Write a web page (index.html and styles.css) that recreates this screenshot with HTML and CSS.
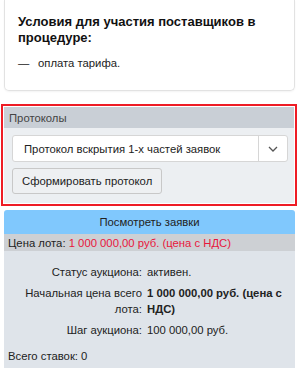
FILE: index.html
```html
<!DOCTYPE html>
<html lang="ru">
<head>
    <meta charset="UTF-8">
    <meta name="viewport" content="width=device-width, initial-scale=1.0">
    <title>Процедура</title>
    <link rel="stylesheet" href="styles.css">
</head>
<body>
    <!-- Условия участия -->
    <div class="card">
        <h3 class="card-title">Условия для участия поставщиков в процедуре:</h3>
        <ul class="conditions">
            <li><span class="dash">—</span>оплата тарифа.</li>
        </ul>
    </div>

    <!-- Протоколы (выделено рамкой) -->
    <div class="highlight">
        <div class="panel">
            <div class="panel-head">Протоколы</div>
            <div class="panel-body">
                <div class="select">
                    <span class="select-value">Протокол вскрытия 1-х частей заявок</span>
                    <span class="select-arrow">
                        <svg width="10" height="6" viewBox="0 0 10 6"><path d="M1 1l4 4 4-4" fill="none" stroke="#555" stroke-width="1.3"/></svg>
                    </span>
                </div>
                <button class="btn">Сформировать протокол</button>
            </div>
        </div>
    </div>

    <!-- Аукцион -->
    <button class="btn-view">Посмотреть заявки</button>
    <div class="lot-price">Цена лота: <span class="red">1 000 000,00 руб. (цена с НДС)</span></div>
    <div class="info">
        <table class="info-table">
            <tr>
                <td class="label">Статус аукциона:</td>
                <td>активен.</td>
            </tr>
            <tr>
                <td class="label">Начальная цена всего лота:</td>
                <td class="bold">1 000 000,00 руб. (цена с НДС)</td>
            </tr>
            <tr>
                <td class="label">Шаг аукциона:</td>
                <td>100 000,00 руб.</td>
            </tr>
        </table>
        <div class="bids">Всего ставок: 0</div>
    </div>
</body>
</html>
```

FILE: styles.css
```css
* {
    margin: 0;
    padding: 0;
    box-sizing: border-box;
}

body {
    font-family: "Liberation Sans", Arial, sans-serif;
    font-size: 11.3px;
    line-height: 16px;
    color: #222;
    background: #fff;
    padding: 0 5px 0 4px;
}

/* card with conditions */
.card {
    border: 1px solid #e2e2e2;
    border-top: none;
    border-radius: 0 0 5px 5px;
    padding: 14px 13px 19px;
    box-shadow: 0 1px 2px rgba(0, 0, 0, 0.05);
}

.card-title {
    font-size: 13px;
    font-weight: bold;
    line-height: 16px;
    color: #111;
}

.conditions {
    list-style: none;
    margin-top: 9px;
}

.conditions li {
    display: flex;
}

.dash {
    width: 20px;
}

/* red highlight around protocols */
.highlight {
    margin: 13px -2px 0 -3px;
    border: 2px solid #ee1c25;
    padding: 1px;
}

.panel {
    background: #eceff2;
}

.panel-head {
    background: #c9cfd6;
    color: #444;
    padding: 3px 5px 2px;
}

.panel-body {
    padding: 7px 6px 9px 8px;
}

.select {
    display: flex;
    align-items: center;
    height: 27px;
    background: #fff;
    border: 1px solid #d6d6d6;
    border-radius: 3px;
}

.select-value {
    flex: 1;
    padding-left: 11px;
}

.select-arrow {
    width: 29px;
    height: 100%;
    border-left: 1px solid #d6d6d6;
    display: flex;
    align-items: center;
    justify-content: center;
}

.btn {
    margin-top: 6px;
    height: 26px;
    padding: 0 9px;
    font: inherit;
    color: #222;
    background: #eef0f2;
    border: 1px solid #c8c8c8;
    border-radius: 3px;
}

.btn-view {
    display: block;
    width: 100%;
    height: 24px;
    margin-top: 4px;
    font: inherit;
    color: #222;
    background: #80c8fd;
    border: none;
    border-radius: 3px 3px 0 0;
}

.lot-price {
    background: #cdd0d4;
    padding: 1px 4px 0;
    height: 17px;
}

.red {
    color: #e8163c;
}

.info {
    background: #dfe4ea;
    padding: 13px 4px 20px;
}

.info-table {
    border-collapse: collapse;
    width: 100%;
}

.info-table td {
    vertical-align: top;
    padding: 0 0 5px 5px;
}

.info-table .label {
    text-align: right;
    width: 134px;
    padding-left: 0;
}

.bold {
    font-weight: bold;
}

.bids {
    margin-top: 5px;
}
```
